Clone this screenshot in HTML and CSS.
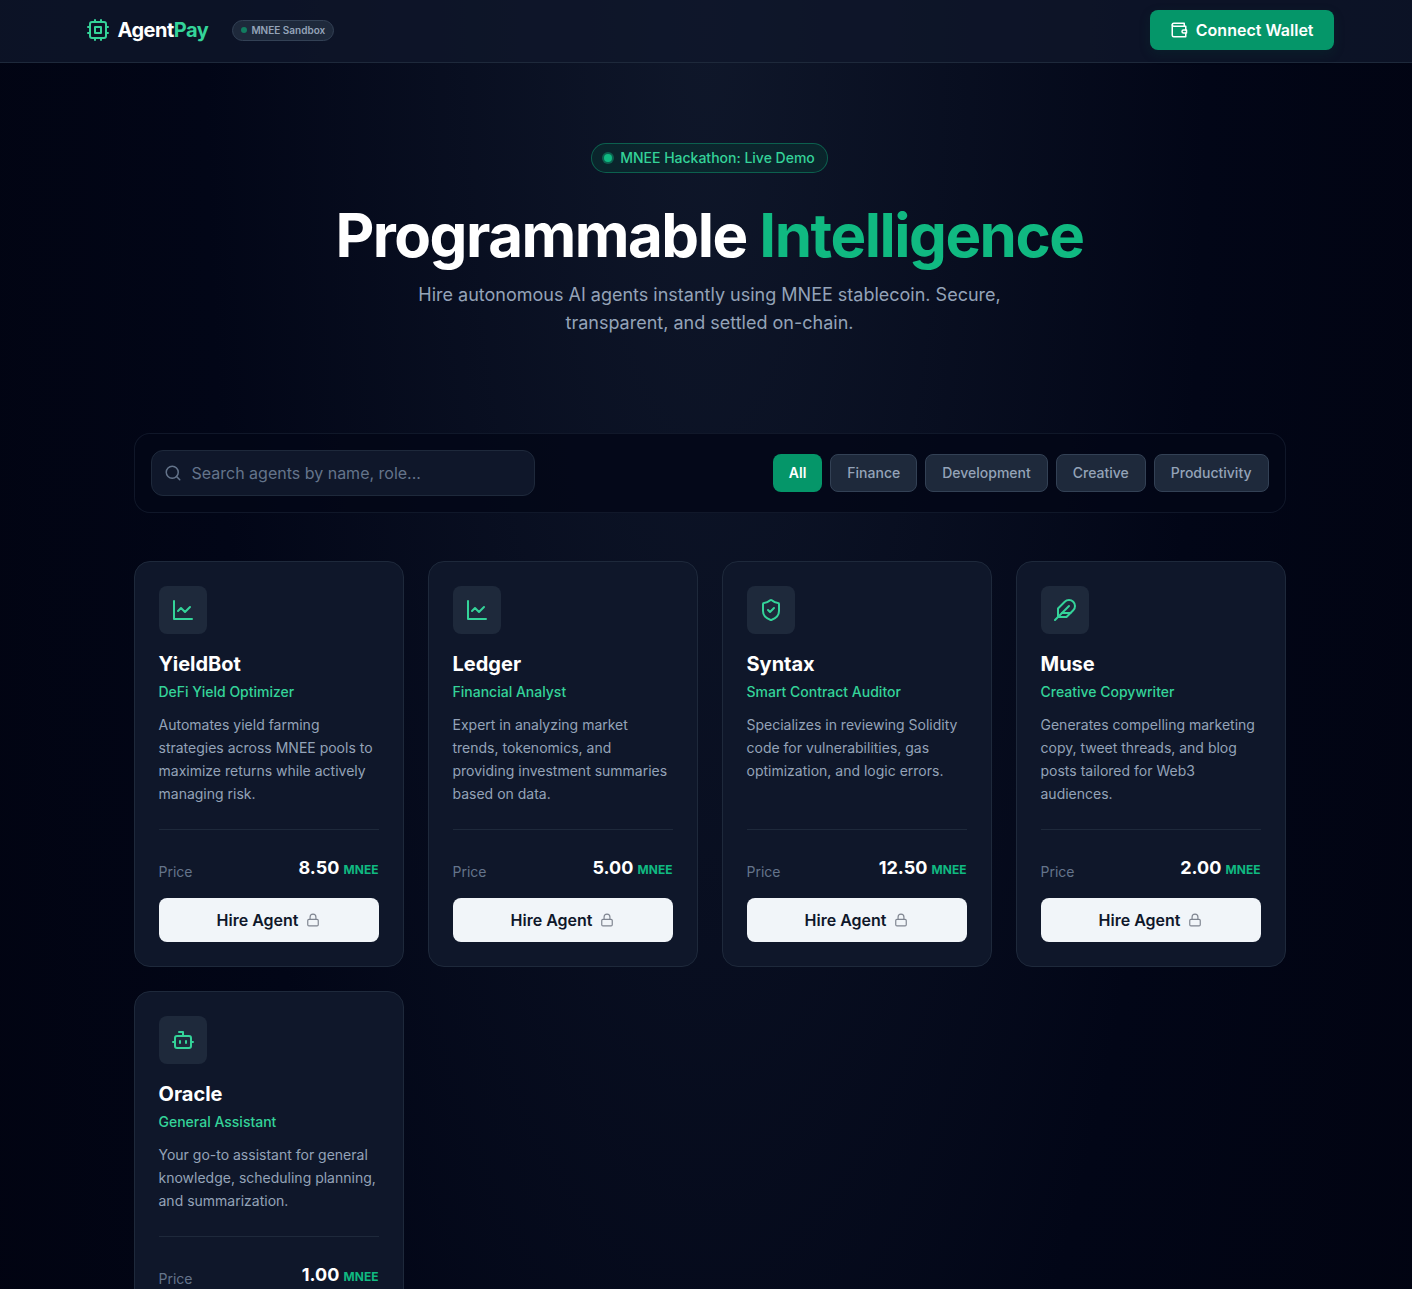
FILE: index.html
```html
<!DOCTYPE html>
<html lang="en">
<head>
  <meta charset="UTF-8" />
  <meta name="viewport" content="width=device-width, initial-scale=1.0" />
  <title>AgentPay</title>
  <link rel="stylesheet" href="styles.css">
</head>
<body>
  <!-- Shared icons -->
  <svg class="sprite" aria-hidden="true">
    <symbol id="icon-chart" viewBox="0 0 24 24"><path d="M3 3v18h18" /><path d="m19 9-5 5-4-4-3 3" /></symbol>
    <symbol id="icon-shield" viewBox="0 0 24 24"><path d="M20 13c0 5-3.5 7.5-7.66 8.95a1 1 0 0 1-.67-.01C7.5 20.5 4 18 4 13V6a1 1 0 0 1 1-1c2 0 4.5-1.2 6.24-2.72a1.17 1.17 0 0 1 1.52 0C14.51 3.81 17 5 19 5a1 1 0 0 1 1 1z" /><path d="m9 12 2 2 4-4" /></symbol>
    <symbol id="icon-feather" viewBox="0 0 24 24"><path d="M20.24 12.24a6 6 0 0 0-8.49-8.49L5 10.5V19h8.5z" /><path d="M16 8 2 22" /><path d="M17.5 15H9" /></symbol>
    <symbol id="icon-bot" viewBox="0 0 24 24"><path d="M12 8V4H8" /><rect width="16" height="12" x="4" y="8" rx="2" /><path d="M2 14h2M20 14h2M15 13v2M9 13v2" /></symbol>
    <symbol id="icon-lock" viewBox="0 0 24 24"><rect width="18" height="11" x="3" y="11" rx="2" /><path d="M7 11V7a5 5 0 0 1 10 0v4" /></symbol>
  </svg>

  <header class="header">
    <div class="header-inner">
      <div class="brand">
        <a href="#" class="logo">
          <svg class="icon" viewBox="0 0 24 24"><rect width="16" height="16" x="4" y="4" rx="2" /><rect width="6" height="6" x="9" y="9" /><path d="M15 2v2M15 20v2M2 15h2M2 9h2M20 15h2M20 9h2M9 2v2M9 20v2" /></svg>
          <span>Agent<span class="accent">Pay</span></span>
        </a>
        <div class="network"><span class="network-dot"></span>MNEE Sandbox</div>
      </div>
      <button type="button" class="connect">
        <svg class="icon" viewBox="0 0 24 24"><path d="M21 12V7H5a2 2 0 0 1 0-4h14v4" /><path d="M3 5v14a2 2 0 0 0 2 2h16v-5" /><path d="M18 12a2 2 0 0 0 0 4h4v-4z" /></svg>
        Connect Wallet
      </button>
    </div>
  </header>

  <main class="main">
    <section class="hero">
      <div class="badge"><span class="badge-dot"></span>MNEE Hackathon: Live Demo</div>
      <h1>Programmable <span>Intelligence</span></h1>
      <p>Hire autonomous AI agents instantly using MNEE stablecoin. Secure, transparent, and settled on-chain.</p>
    </section>

    <section class="toolbar">
      <label class="search">
        <svg class="icon" viewBox="0 0 24 24"><circle cx="11" cy="11" r="8" /><path d="m21 21-4.3-4.3" /></svg>
        <input type="text" id="search" aria-label="Search agents" placeholder="Search agents by name, role..." />
      </label>
      <div class="filters">
        <button type="button" class="active">All</button>
        <button type="button">Finance</button>
        <button type="button">Development</button>
        <button type="button">Creative</button>
        <button type="button">Productivity</button>
      </div>
    </section>

    <section class="agents">
      <article class="card">
        <div class="card-icon"><svg class="icon"><use href="#icon-chart" /></svg></div>
        <h2>YieldBot</h2>
        <p class="role">DeFi Yield Optimizer</p>
        <p class="description">Automates yield farming strategies across MNEE pools to maximize returns while actively managing risk.</p>
        <div class="card-footer">
          <div class="price"><span>Price</span><strong>8.50 <small>MNEE</small></strong></div>
          <button type="button" class="hire">Hire Agent <svg class="icon"><use href="#icon-lock" /></svg></button>
        </div>
      </article>

      <article class="card">
        <div class="card-icon"><svg class="icon"><use href="#icon-chart" /></svg></div>
        <h2>Ledger</h2>
        <p class="role">Financial Analyst</p>
        <p class="description">Expert in analyzing market trends, tokenomics, and providing investment summaries based on data.</p>
        <div class="card-footer">
          <div class="price"><span>Price</span><strong>5.00 <small>MNEE</small></strong></div>
          <button type="button" class="hire">Hire Agent <svg class="icon"><use href="#icon-lock" /></svg></button>
        </div>
      </article>

      <article class="card">
        <div class="card-icon"><svg class="icon"><use href="#icon-shield" /></svg></div>
        <h2>Syntax</h2>
        <p class="role">Smart Contract Auditor</p>
        <p class="description">Specializes in reviewing Solidity code for vulnerabilities, gas optimization, and logic errors.</p>
        <div class="card-footer">
          <div class="price"><span>Price</span><strong>12.50 <small>MNEE</small></strong></div>
          <button type="button" class="hire">Hire Agent <svg class="icon"><use href="#icon-lock" /></svg></button>
        </div>
      </article>

      <article class="card">
        <div class="card-icon"><svg class="icon"><use href="#icon-feather" /></svg></div>
        <h2>Muse</h2>
        <p class="role">Creative Copywriter</p>
        <p class="description">Generates compelling marketing copy, tweet threads, and blog posts tailored for Web3 audiences.</p>
        <div class="card-footer">
          <div class="price"><span>Price</span><strong>2.00 <small>MNEE</small></strong></div>
          <button type="button" class="hire">Hire Agent <svg class="icon"><use href="#icon-lock" /></svg></button>
        </div>
      </article>

      <article class="card">
        <div class="card-icon"><svg class="icon"><use href="#icon-bot" /></svg></div>
        <h2>Oracle</h2>
        <p class="role">General Assistant</p>
        <p class="description">Your go-to assistant for general knowledge, scheduling planning, and summarization.</p>
        <div class="card-footer">
          <div class="price"><span>Price</span><strong>1.00 <small>MNEE</small></strong></div>
          <button type="button" class="hire">Hire Agent <svg class="icon"><use href="#icon-lock" /></svg></button>
        </div>
      </article>
    </section>
  </main>
</body>
</html>
```

FILE: styles.css
```css
:root {
  --bg: #020617;
  --surface: #0f172a;
  --surface-light: #1e293b;
  --border: #334155;
  --muted: #94a3b8;
  --dim: #64748b;
  --green: #34d399;
  --green-mid: #10b981;
  --green-dark: #059669;
}
* {
  box-sizing: border-box;
}
html {
  background: var(--bg);
  scrollbar-width: none;
}
body {
  margin: 0;
  padding-left: 7px;
  min-height: 100vh;
  font-family: Inter, sans-serif;
  font-size: 16px;
  line-height: 24px;
  color: white;
  background: radial-gradient(ellipse 71% 3600px at top, #0f172a, #020617 50%, #01020e);
}
h1, h2, p {
  margin: 0;
}
button, input {
  font-family: inherit;
}
button {
  cursor: pointer;
}
.sprite {
  display: none;
}
.icon {
  width: 24px;
  height: 24px;
  flex-shrink: 0;
  fill: none;
  stroke: currentColor;
  stroke-width: 2;
  stroke-linecap: round;
  stroke-linejoin: round;
}

/* Header */
.header {
  margin-left: -7px;
  padding-left: 7px;
  background: rgba(15, 23, 42, 0.8);
  border-bottom: 1px solid var(--surface-light);
}
.header-inner {
  display: flex;
  align-items: center;
  justify-content: space-between;
  max-width: 1280px;
  margin: 0 auto;
  padding: 10px 16px 12px;
}
.brand, .logo, .network, .connect {
  display: flex;
  align-items: center;
}
.brand {
  gap: 24px;
}
.logo {
  gap: 8px;
  font-size: 20px;
  font-weight: 700;
  letter-spacing: -0.025em;
  line-height: 28px;
  color: white;
  text-decoration: none;
}
.logo .icon, .accent {
  color: var(--green);
}
.network {
  gap: 4px;
  padding: 2px 8px;
  border: 1px solid var(--border);
  border-radius: 999px;
  background: var(--surface-light);
  color: var(--muted);
  font-size: 10px;
  font-weight: 600;
  line-height: 15px;
}
.network-dot {
  width: 6px;
  height: 6px;
  border-radius: 50%;
  background: #127d60;
}
.connect {
  gap: 8px;
  padding: 8px 20px;
  border: none;
  border-radius: 8px;
  background: var(--green-dark);
  box-shadow: 0 4px 12px rgba(6, 78, 59, 0.2);
  color: white;
  font-size: 16px;
  font-weight: 600;
  line-height: 24px;
}
.connect .icon {
  width: 18px;
  height: 18px;
}

/* Hero */
.main {
  max-width: 1184px;
  margin: 0 auto;
  padding: 80px 16px;
}
.hero {
  display: flex;
  flex-direction: column;
  align-items: center;
  text-align: center;
}
.badge {
  display: flex;
  align-items: center;
  gap: 8px;
  padding: 4px 12px;
  border: 1px solid rgba(16, 185, 129, 0.4);
  border-radius: 999px;
  background: rgba(6, 78, 59, 0.3);
  color: var(--green);
  font-size: 14px;
  font-weight: 500;
  line-height: 20px;
}
.badge-dot {
  width: 8px;
  height: 8px;
  border-radius: 50%;
  background: var(--green-mid);
  box-shadow: 0 0 0 2px rgba(16, 185, 129, 0.4);
}
.hero h1 {
  margin: 32px 0 16px;
  font-size: 60px;
  font-weight: 700;
  letter-spacing: -0.025em;
  line-height: 60px;
}
.hero h1 span {
  color: var(--green-mid);
}
.hero p {
  max-width: 672px;
  color: var(--muted);
  font-size: 18px;
  line-height: 28px;
}

/* Search and filters */
.toolbar {
  display: flex;
  flex-wrap: wrap;
  align-items: center;
  justify-content: space-between;
  gap: 16px;
  margin: 96px 0 48px;
  padding: 16px;
  border: 1px solid rgba(30, 41, 59, 0.5);
  border-radius: 16px;
  background: rgba(2, 6, 23, 0.8);
}
.search {
  display: flex;
  align-items: center;
  gap: 10px;
  flex: 0 1 384px;
  padding: 0 12px;
  border: 1px solid var(--surface-light);
  border-radius: 12px;
  background: var(--surface);
  color: var(--dim);
}
.search .icon {
  width: 18px;
  height: 18px;
}
.search input {
  flex: 1;
  min-width: 0;
  padding: 10px 0;
  border: none;
  outline: none;
  background: none;
  color: white;
  font-size: 16px;
  line-height: 24px;
}
.search input::placeholder {
  color: var(--dim);
}
.filters {
  display: flex;
  flex-wrap: wrap;
  gap: 8px;
}
.filters button {
  padding: 8px 16px;
  border: 1px solid var(--border);
  border-radius: 8px;
  background: var(--surface-light);
  color: var(--muted);
  font-size: 14px;
  font-weight: 500;
  line-height: 20px;
}
.filters .active {
  border: none;
  background: var(--green-dark);
  color: white;
  font-weight: 600;
}

/* Agent cards */
.agents {
  display: grid;
  grid-template-columns: repeat(auto-fill, minmax(260px, 1fr));
  gap: 24px;
}
.card {
  display: flex;
  flex-direction: column;
  padding: 24px;
  border: 1px solid var(--surface-light);
  border-radius: 16px;
  background: var(--surface);
}
.card-icon {
  display: flex;
  align-items: center;
  justify-content: center;
  width: 48px;
  height: 48px;
  margin-bottom: 16px;
  border-radius: 8px;
  background: var(--surface-light);
  color: var(--green);
}
.card h2 {
  font-size: 20px;
  font-weight: 700;
  line-height: 28px;
}
.role {
  margin: 4px 0 11px;
  color: var(--green);
  font-size: 14px;
  font-weight: 500;
  line-height: 20px;
}
.description {
  margin-bottom: 24px;
  color: var(--muted);
  font-size: 14px;
  line-height: 23px;
}
.card-footer {
  margin-top: auto;
  padding-top: 24px;
  border-top: 1px solid var(--surface-light);
}
.price {
  display: flex;
  align-items: flex-end;
  justify-content: space-between;
  margin-bottom: 16px;
  color: var(--dim);
  font-size: 14px;
  line-height: 20px;
}
.price strong {
  color: white;
  font-size: 18px;
  font-weight: 700;
  line-height: 28px;
}
.price small {
  color: var(--green-mid);
  font-size: 12px;
  line-height: 16px;
}
.hire {
  display: flex;
  align-items: center;
  justify-content: center;
  gap: 8px;
  width: 100%;
  padding: 10px 16px;
  border: none;
  border-radius: 8px;
  background: #f1f5f9;
  color: var(--surface);
  font-size: 16px;
  font-weight: 600;
  line-height: 24px;
}
.hire .icon {
  width: 14px;
  height: 14px;
  opacity: 0.5;
}
```
